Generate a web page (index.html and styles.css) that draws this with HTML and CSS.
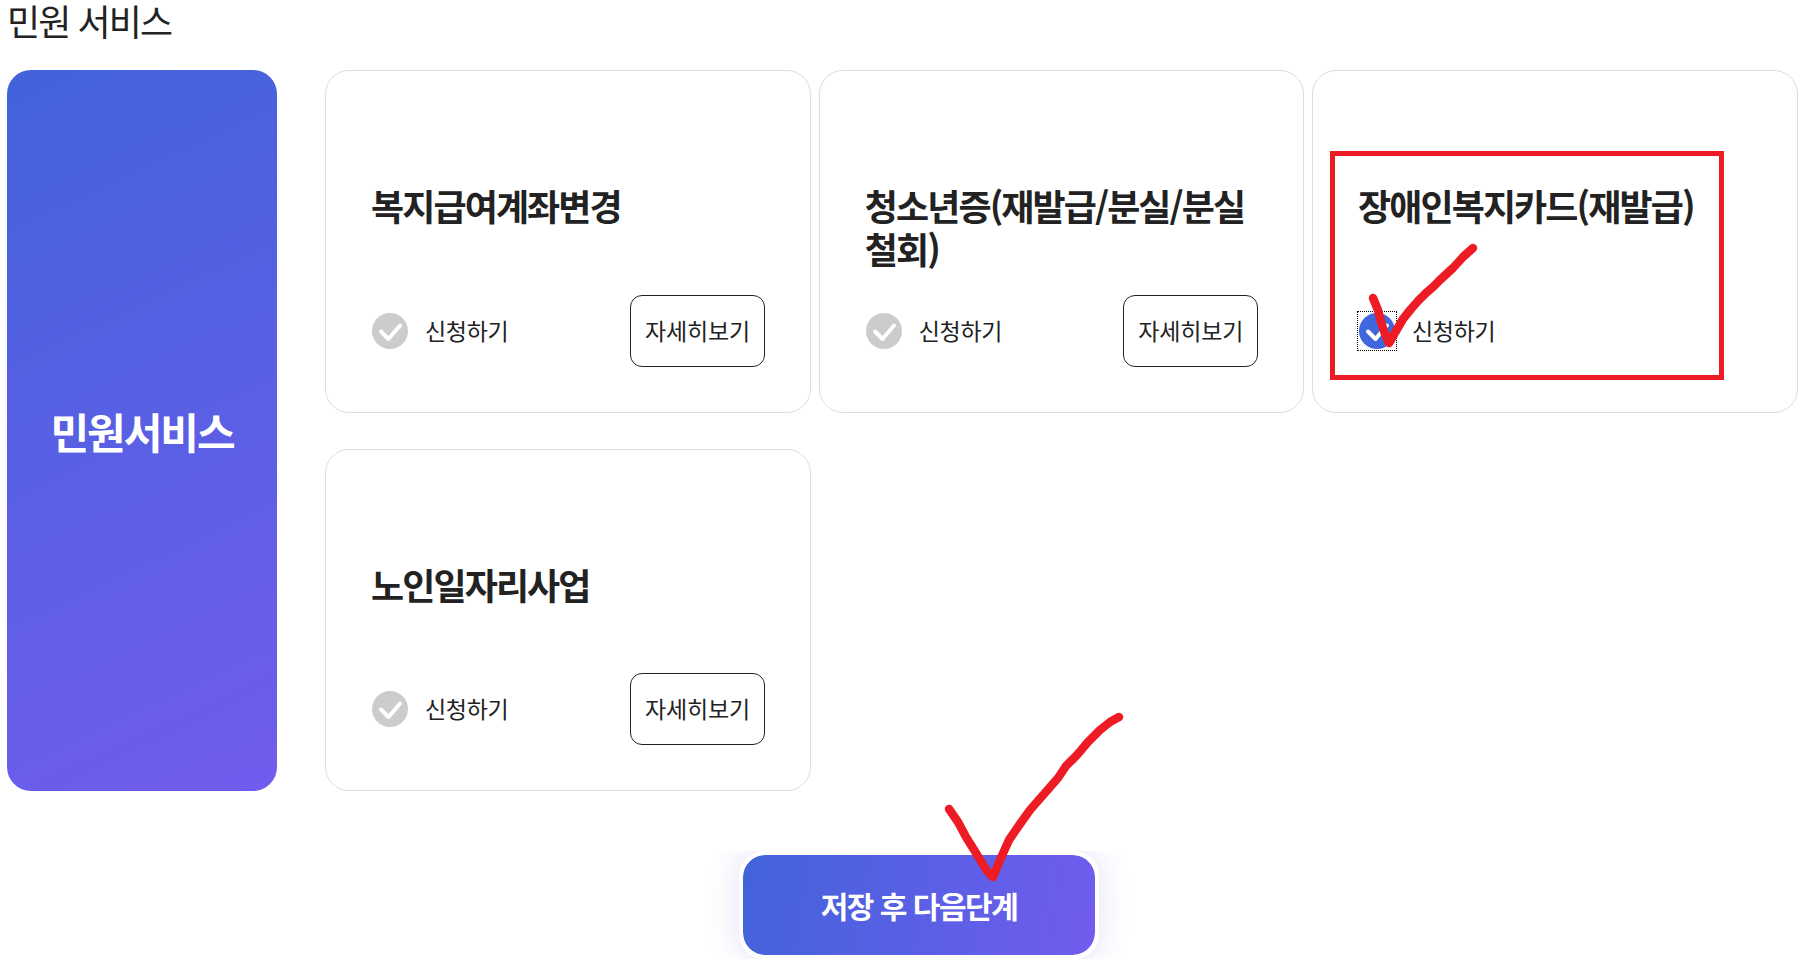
FILE: index.html
```html
<!DOCTYPE HTML>
<html lang="ko">
<head>
    <title>민원 서비스</title>
    <meta charset="utf-8">
    <link rel="stylesheet" href="styles.css">
</head>
<body>

<h2 class="page-title">민원 서비스</h2>

<div class="service">
    <div class="service-side">민원서비스</div>
    <ul class="service-list">
        <li class="card">
            <h3 class="card-title">복지급여계좌변경</h3>
            <div class="card-row">
                <label class="apply">
                    <svg class="apply-icon" viewBox="0 0 36 36"><circle cx="18" cy="18" r="18"/><path d="M9 18.5l7.5 7.5 11.5-13.5"/></svg>
                    신청하기
                </label>
                <a class="more" href="#">자세히보기</a>
            </div>
        </li>
        <li class="card">
            <h3 class="card-title">청소년증(재발급/분실/분실철회)</h3>
            <div class="card-row">
                <label class="apply">
                    <svg class="apply-icon" viewBox="0 0 36 36"><circle cx="18" cy="18" r="18"/><path d="M9 18.5l7.5 7.5 11.5-13.5"/></svg>
                    신청하기
                </label>
                <a class="more" href="#">자세히보기</a>
            </div>
        </li>
        <li class="card">
            <h3 class="card-title">장애인복지카드(재발급)</h3>
            <div class="card-row">
                <label class="apply checked">
                    <svg class="apply-icon" viewBox="0 0 36 36"><circle cx="18" cy="18" r="18"/><path d="M9 18.5l7.5 7.5 11.5-13.5"/></svg>
                    신청하기
                </label>
            </div>
        </li>
        <li class="card">
            <h3 class="card-title">노인일자리사업</h3>
            <div class="card-row">
                <label class="apply">
                    <svg class="apply-icon" viewBox="0 0 36 36"><circle cx="18" cy="18" r="18"/><path d="M9 18.5l7.5 7.5 11.5-13.5"/></svg>
                    신청하기
                </label>
                <a class="more" href="#">자세히보기</a>
            </div>
        </li>
    </ul>
</div>

<div class="next-wrap">
    <button class="next" type="button">저장 후 다음단계</button>
</div>

<!-- red marks drawn on top of the page -->
<svg class="marks" width="1808" height="979" viewBox="0 0 1808 979">
    <rect x="1332.5" y="153.5" width="389" height="224"/>
    <polyline points="1373,298 1378,310 1381,322 1385,334 1389,343 1396,331 1403,319 1411,309 1418,301 1426,293 1433,287 1441,279 1453,268 1463,257 1473,248"/>
    <polyline points="949,809 958,822 966,837 976,853 987,871 993,877 1000,860 1009,840 1020,824 1030,810 1044,794 1058,778 1066,766 1077,755 1088,742 1100,730 1110,722 1119,717"/>
</svg>

</body>
</html>
```

FILE: styles.css
```css
html, body {
    margin: 0;
    height: 979px;
    overflow: hidden;
    background: #fff;
}
body {
    position: relative;
    padding: 0 10px 0 7px;
    font-family: "Noto Sans CJK KR", "Noto Sans", sans-serif;
    color: #222;
}
.page-title {
    margin: 0;
    height: 70px;
    font-size: 36px;
    font-weight: 400;
    line-height: 40px;
    letter-spacing: -1.9px;
}
.service {
    display: flex;
    gap: 48px;
}
.service-side {
    flex: 0 0 270px;
    height: 721px;
    display: flex;
    align-items: center;
    justify-content: center;
    border-radius: 24px;
    background: linear-gradient(155deg, #4263da, #715cee);
    color: #fff;
    font-size: 42px;
    font-weight: 700;
    letter-spacing: -2px;
}
.service-list {
    flex: 1;
    margin: 0;
    padding: 0;
    list-style: none;
    display: grid;
    grid-template-columns: 486px 485.5px 486px;
    grid-template-rows: 343px 342px;
    column-gap: 7.75px;
    row-gap: 36px;
}
.card {
    display: flex;
    flex-direction: column;
    padding: 113px 45px 45px;
    border: 1px solid #ddd;
    border-radius: 24px;
}
.card-title {
    margin: 0;
    font-size: 36px;
    font-weight: 700;
    line-height: 43px;
    letter-spacing: -1.9px;
}
.card-row {
    margin-top: auto;
    height: 72px;
    display: flex;
    align-items: center;
    justify-content: space-between;
}
.apply {
    display: flex;
    align-items: center;
    gap: 17px;
    margin-left: 1px;
    margin-top: -2px;
    font-size: 23px;
    letter-spacing: -0.3px;
    line-height: 36px;
}
.apply-icon {
    width: 36px;
    height: 36px;
    margin-top: 2px;
    fill: #ccc;
}
.apply-icon path {
    fill: none;
    stroke: #fff;
    stroke-width: 4;
    stroke-linecap: round;
    stroke-linejoin: round;
}
.checked .apply-icon {
    fill: #4166dd;
    outline: 1px dotted #000;
    outline-offset: 1px;
}
.more {
    box-sizing: border-box;
    width: 135px;
    height: 72px;
    padding-bottom: 2px;
    display: flex;
    align-items: center;
    justify-content: center;
    border: 1px solid #222;
    border-radius: 12px;
    color: #222;
    font-size: 23px;
    letter-spacing: -0.2px;
    text-decoration: none;
}
.next-wrap {
    margin-top: 60px;
    height: 108px;
    padding-left: 33px;
    overflow: hidden;
    display: flex;
    justify-content: center;
}
.next {
    box-sizing: border-box;
    width: 360px;
    height: 108px;
    border: 4px solid #fff;
    border-radius: 26px;
    background: linear-gradient(100deg, #4263da, #715cee) border-box;
    background-clip: padding-box;
    box-shadow: 0 0 32px rgba(90, 80, 220, .18);
    color: #fff;
    font-family: inherit;
    font-size: 30px;
    font-weight: 700;
    letter-spacing: -1.5px;
}
.marks {
    position: absolute;
    left: 0;
    top: 0;
    pointer-events: none;
}
.marks rect {
    fill: none;
    stroke: #ed1c24;
    stroke-width: 5;
}
.marks polyline {
    fill: none;
    stroke: #ed1c24;
    stroke-width: 8.5;
    stroke-linecap: round;
    stroke-linejoin: round;
}
```
